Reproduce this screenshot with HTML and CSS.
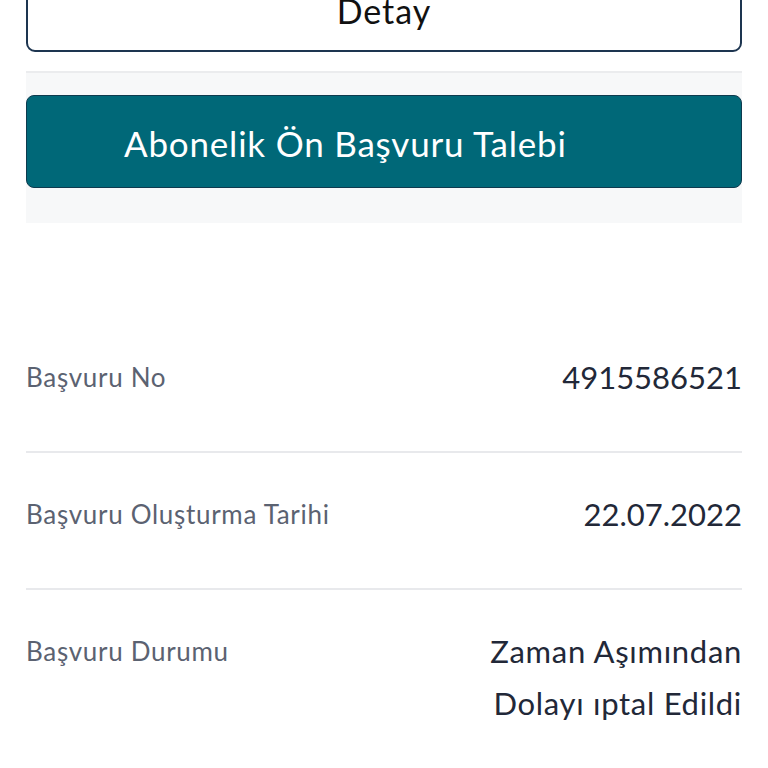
FILE: index.html
```html
<!DOCTYPE html>
<html lang="tr">
<head>
    <meta charset="UTF-8">
    <meta name="viewport" content="width=device-width, initial-scale=1.0">
    <title>Başvuru Detayı</title>
    <link rel="stylesheet" href="styles.css">
</head>
<body>
    <div class="page">
        <button class="detail-btn">Detay</button>

        <div class="request-box">
            <button class="request-btn">Abonelik Ön Başvuru Talebi</button>
        </div>

        <div class="info-list">
            <div class="info-row">
                <span class="label">Başvuru No</span>
                <span class="value num">4915586521</span>
            </div>
            <div class="info-row">
                <span class="label">Başvuru Oluşturma Tarihi</span>
                <span class="value num">22.07.2022</span>
            </div>
            <div class="info-row">
                <span class="label">Başvuru Durumu</span>
                <span class="value">Zaman Aşımından<br>Dolayı ıptal Edildi</span>
            </div>
        </div>
    </div>
</body>
</html>
```

FILE: styles.css
```css
* {
    margin: 0;
    padding: 0;
    box-sizing: border-box;
    font-family: 'Lato', 'Noto Sans', sans-serif;
}

body {
    background: #fff;
    overflow: hidden;
}

.page {
    margin: -32px 26px 0 26px;
    display: flex;
    flex-direction: column;
}

/* ust buton */
.detail-btn {
    height: 84px;
    background: #fff;
    border: 2px solid #1d3550;
    border-radius: 9px;
    font-size: 34px;
    letter-spacing: 1px;
    color: #111;
}

.request-box {
    margin-top: 19px;
    border-top: 2px solid #ebecee;
    background: #f7f8f9;
    padding: 22px 0 35px 0;
}

.request-btn {
    width: 100%;
    height: 93px;
    background: #006878;
    border: 1.5px solid #0e3a4e;
    border-radius: 8px;
    color: #fff;
    font-size: 35px;
    letter-spacing: 0.8px;
    text-align: left;
    padding-left: 97px;
    padding-top: 3px;
}

/* bilgi listesi */
.info-list {
    margin-top: 118px;
    display: flex;
    flex-direction: column;
}

.info-row {
    display: flex;
    justify-content: space-between;
    align-items: flex-start;
    padding: 18px 0 48px 0;
    border-bottom: 2px solid #e8e9ec;
}

.info-row + .info-row {
    padding-top: 43px;
}

.label {
    font-size: 26px;
    letter-spacing: 0.7px;
    color: #5b6271;
    line-height: 36px;
}

.value {
    font-size: 31px;
    letter-spacing: 0.7px;
    color: #222838;
    text-align: right;
    line-height: 52px;
    margin-top: -8px;
}

.value.num {
    letter-spacing: 0;
}
```
